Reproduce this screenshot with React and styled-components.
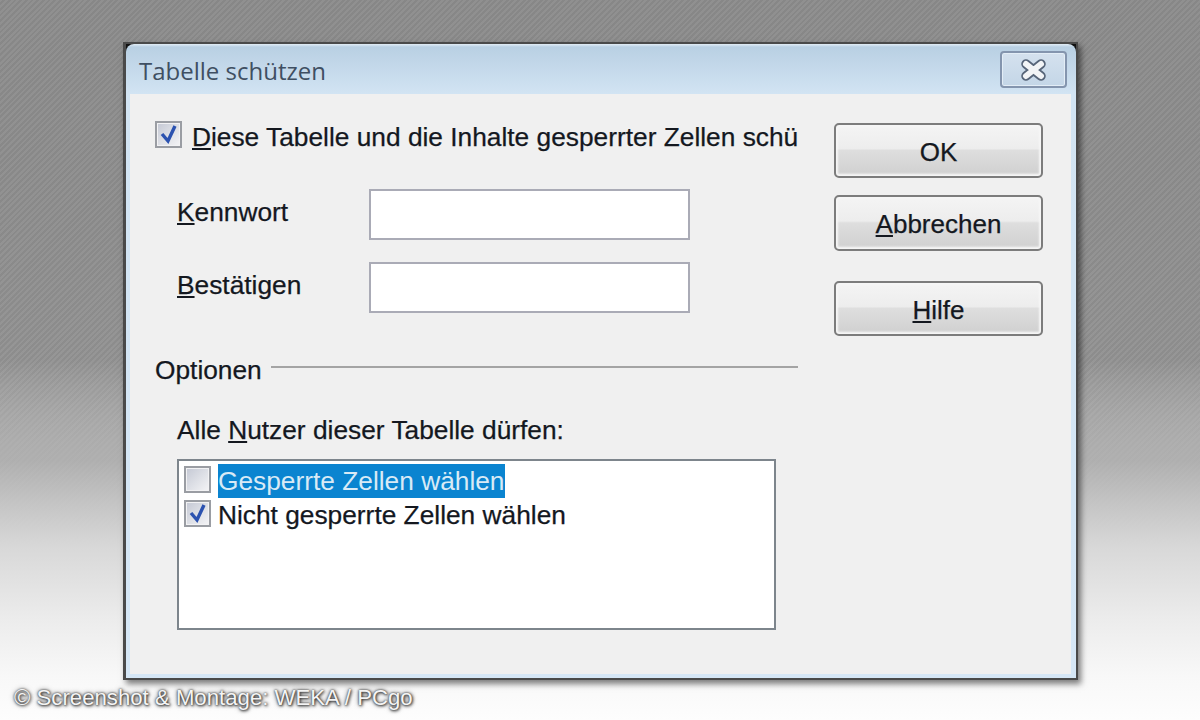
import styled, { createGlobalStyle } from "styled-components";

const Global = createGlobalStyle`
  html, body {
    margin: 0;
    height: 100%;
  }
  #root {
    height: 100%;
  }
`;

const Page = styled.div`
  position: relative;
  box-sizing: border-box;
  width: 1200px;
  height: 720px;
  padding: 42px 0 0 123px;
  overflow: hidden;
  font-family: "Liberation Sans", Arial, sans-serif;
  font-size: 26.3px;
  color: #14181f;
  -webkit-text-stroke: 0.25px #14181f;
  background:
    linear-gradient(
      180deg,
      rgba(146, 146, 146, 0) 50%,
      rgba(176, 176, 176, 0.8) 64%,
      #d8d8d8 76%,
      #ececec 86%,
      #f8f8f8 94%,
      #fdfdfd 100%
    ),
    repeating-linear-gradient(135deg, rgba(255, 255, 255, 0.035) 0 2px, rgba(0, 0, 0, 0.035) 2px 4px),
    linear-gradient(180deg, #8c8c8c 0%, #8e8e8e 30%, #929292 50%, #b0b0b0 64%, #d8d8d8 100%);
`;

const Window = styled.div`
  box-sizing: border-box;
  width: 955px;
  height: 638px;
  background: #111;
  border: solid #4a4a4a;
  border-width: 2px 2px 2px 3px;
  box-shadow: 3px 4px 6px rgba(0, 0, 0, 0.5);
`;

const Frame = styled.div`
  display: flex;
  flex-direction: column;
  height: 100%;
  box-sizing: border-box;
  padding: 0 5px 4px 4px;
  border-radius: 8px 8px 0 0;
  background: linear-gradient(180deg, #e2edf6 0, #b9d0e3 3px, #c2d7e9 20px, #d2e4f3 50px, #d6e7f6 100%);
`;

const TitleBar = styled.div`
  display: flex;
  align-items: center;
  justify-content: space-between;
  flex: 0 0 50px;
  padding: 0 4px 0 9px;
`;

const Title = styled.div`
  font-family: "Open Sans", sans-serif;
  font-size: 24px;
  color: #3f4f62;
  -webkit-text-stroke: 0;
  margin-top: 3px;
`;

const CloseButton = styled.div`
  display: flex;
  align-items: center;
  justify-content: center;
  box-sizing: border-box;
  width: 67px;
  height: 37px;
  margin-top: 1px;
  border: 2px solid #8495ae;
  border-radius: 4px;
  background: linear-gradient(180deg, #d4e1ee 0%, #c4d6e7 100%);
  box-shadow: inset 0 0 0 1px #e3edf6;
`;

const Client = styled.div`
  flex: 1;
  display: flex;
  background: #f0f0f0;
  padding: 27px 28px 0 25px;
`;

const LeftColumn = styled.div`
  flex: 0 0 643px;
  min-width: 0;
`;

const CheckRow = styled.label`
  display: flex;
  align-items: flex-start;
  gap: 10px;
  white-space: nowrap;
  line-height: 29px;
`;

const Check = styled.span`
  display: flex;
  align-items: center;
  justify-content: center;
  flex: 0 0 auto;
  box-sizing: border-box;
  width: 27px;
  height: 27px;
  border: 2px solid #9a9da3;
  background: linear-gradient(135deg, #c4c8d4 0%, #dfe1e7 55%, #f4f4f6 100%);
  box-shadow: inset 0 0 0 1px #f2f2f4;
`;

const ListCheck = styled(Check)`
  margin-top: -3px;
`;

const RowText = styled.span`
  margin-top: 2px;
`;

const Field = styled.div`
  display: flex;
  align-items: center;
  height: 51px;
  margin: ${(p) => p.$top}px 0 0 22px;
`;

const FieldLabel = styled.label`
  flex: 0 0 192px;
  margin-top: -4px;
`;

const TextBox = styled.div`
  box-sizing: border-box;
  width: 321px;
  height: 51px;
  background: #fff;
  border: 2px solid #aaabb6;
`;

const GroupHead = styled.div`
  display: flex;
  align-items: center;
  gap: 9px;
  margin-top: 42px;
`;

const GroupLine = styled.div`
  flex: 1;
  height: 2px;
  margin-top: -7px;
  background: #a4a4a4;
`;

const ListLabel = styled.div`
  margin: 30px 0 0 22px;
  line-height: 29px;
`;

const ListBox = styled.div`
  box-sizing: border-box;
  width: 599px;
  height: 171px;
  margin: 14px 0 0 22px;
  padding: 3px 0 0 5px;
  background: #fff;
  border: 2px solid #7d858c;
`;

const ListItem = styled.div`
  display: flex;
  align-items: center;
  gap: 7px;
  height: 34px;
  white-space: nowrap;
`;

const ItemText = styled.span`
  line-height: 34px;
  background: ${(p) => (p.$selected ? "#0a84d0" : "transparent")};
  color: ${(p) => (p.$selected ? "#d8eaf6" : "inherit")};
  -webkit-text-stroke: ${(p) => (p.$selected ? "0" : "0.25px #14181f")};
`;

const RightColumn = styled.div`
  display: flex;
  flex-direction: column;
  flex: 0 0 209px;
  margin-left: 36px;
  padding-top: 2px;
`;

const Button = styled.div`
  display: flex;
  align-items: center;
  justify-content: center;
  box-sizing: border-box;
  height: ${(p) => p.$height || 55}px;
  margin-top: ${(p) => p.$top}px;
  padding-top: 3px;
  font-size: 26px;
  border: 2px solid #7c7c7c;
  border-radius: 5px;
  background: linear-gradient(180deg, #f4f4f4 0%, #ededed 46%, #dedede 50%, #d2d2d2 92%, #dedede 100%);
  box-shadow: inset 0 0 2px 2px #f6f6f6;
`;

const Credit = styled.div`
  position: absolute;
  left: 14px;
  top: 684px;
  font-size: 22.2px;
  line-height: 28px;
  color: #f4f4f4;
  -webkit-text-stroke: 0;
  text-shadow: 0 0 2px #333, 1px 1px 3px #333, 0 0 5px #666;
`;

function CheckMark() {
  return (
    <svg width="23" height="23" viewBox="0 0 23 23">
      <path d="M5 11 L11 18 L18 3" fill="none" stroke="#2b52b0" strokeWidth="3.4" />
    </svg>
  );
}

function CloseIcon() {
  return (
    <svg width="27" height="22" viewBox="0 0 27 22">
      <path
        d="M6 5 L21 17 M21 5 L6 17"
        fill="none"
        stroke="#566478"
        strokeWidth="9.5"
        strokeLinecap="round"
      />
      <path
        d="M6 5 L21 17 M21 5 L6 17"
        fill="none"
        stroke="#f2f4f6"
        strokeWidth="6"
        strokeLinecap="round"
      />
    </svg>
  );
}

export default function App() {
  return (
    <Page>
      <Global />
      <Window>
        <Frame>
          <TitleBar>
            <Title>Tabelle schützen</Title>
            <CloseButton>
              <CloseIcon />
            </CloseButton>
          </TitleBar>
          <Client>
            <LeftColumn>
              <CheckRow>
                <Check>
                  <CheckMark />
                </Check>
                <RowText>
                  <u>D</u>iese Tabelle und die Inhalte gesperrter Zellen schü
                </RowText>
              </CheckRow>
              <Field $top={37}>
                <FieldLabel>
                  <u>K</u>ennwort
                </FieldLabel>
                <TextBox />
              </Field>
              <Field $top={22}>
                <FieldLabel>
                  <u>B</u>estätigen
                </FieldLabel>
                <TextBox />
              </Field>
              <GroupHead>
                Optionen
                <GroupLine />
              </GroupHead>
              <ListLabel>
                Alle <u>N</u>utzer dieser Tabelle dürfen:
              </ListLabel>
              <ListBox>
                <ListItem>
                  <ListCheck />
                  <ItemText $selected>Gesperrte Zellen wählen</ItemText>
                </ListItem>
                <ListItem>
                  <ListCheck>
                    <CheckMark />
                  </ListCheck>
                  <ItemText>Nicht gesperrte Zellen wählen</ItemText>
                </ListItem>
              </ListBox>
            </LeftColumn>
            <RightColumn>
              <Button>OK</Button>
              <Button $top={17} $height={56}>
                <span>
                  <u>A</u>bbrechen
                </span>
              </Button>
              <Button $top={30}>
                <span>
                  <u>H</u>ilfe
                </span>
              </Button>
            </RightColumn>
          </Client>
        </Frame>
      </Window>
      <Credit>© Screenshot &amp; Montage: WEKA / PCgo</Credit>
    </Page>
  );
}
